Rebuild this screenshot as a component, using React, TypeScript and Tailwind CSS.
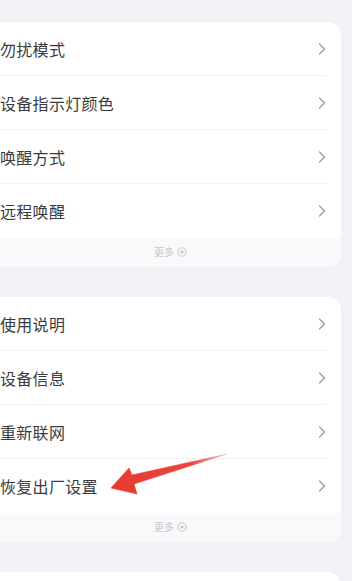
import React from "react";

const Chevron = () => (
  <svg width="8" height="12" viewBox="0 0 8 12" fill="none" className="shrink-0">
    <path d="M1.5 1 L6.5 6 L1.5 11" stroke="#9a9a9e" strokeWidth="1.2" strokeLinecap="round" strokeLinejoin="round" />
  </svg>
);

const MoreIcon = () => (
  <svg width="10" height="10" viewBox="0 0 10 10" fill="none">
    <circle cx="5" cy="5" r="4.2" stroke="#c4c4c8" strokeWidth="1" />
    <circle cx="5" cy="5" r="1.6" fill="#c4c4c8" />
  </svg>
);

function Card({ items }: { items: string[] }) {
  return (
    <div className="ml-[-16px] mr-[11px] rounded-[13px] bg-white overflow-hidden">
      {items.map((t, i) => (
        <div key={t} className="pl-[16px] pr-[15px]">
          <div
            className={
              "h-[54px] flex items-center justify-between " +
              (i < items.length - 1 ? "border-b border-[#f1f1f3]" : "")
            }
          >
            <span className="text-[16px] leading-none text-[#3b3b3d] tracking-[0.3px]">{t}</span>
            <Chevron />
          </div>
        </div>
      ))}
      <div className="h-[29px] bg-[#f9f9fb] flex items-center justify-center gap-[3px] pl-[16px] pb-[1px]">
        <span className="text-[10px] leading-none text-[#c6c6ca]">更多</span>
        <MoreIcon />
      </div>
    </div>
  );
}

export default function App() {
  return (
    <div
      className="w-[352px] h-[581px] overflow-hidden bg-[#f1f2f5] relative"
      style={{ fontFamily: '"Noto Sans CJK SC", "Noto Sans", sans-serif' }}
    >
      <div className="pt-[22px] flex flex-col gap-[30px]">
        <Card items={["勿扰模式", "设备指示灯颜色", "唤醒方式", "远程唤醒"]} />
        <Card items={["使用说明", "设备信息", "重新联网", "恢复出厂设置"]} />
        <div className="ml-[-16px] mr-[11px] h-[60px] rounded-[13px] bg-white" />
      </div>
      <svg className="absolute left-0 top-0 pointer-events-none" width="352" height="581" viewBox="0 0 352 581">
        <defs>
          <linearGradient id="ag" x1="227" y1="454" x2="111" y2="488" gradientUnits="userSpaceOnUse">
            <stop offset="0" stopColor="#e8564f" stopOpacity="0.25" />
            <stop offset="0.3" stopColor="#e8463f" />
            <stop offset="1" stopColor="#e9392f" />
          </linearGradient>
        </defs>
        <path
          d="M227 454 L132 475 L129 468 L111 488 L137 494 L134 484 Z"
          fill="url(#ag)"
          stroke="url(#ag)"
          strokeWidth="0.6"
          strokeLinejoin="round"
        />
      </svg>
    </div>
  );
}
